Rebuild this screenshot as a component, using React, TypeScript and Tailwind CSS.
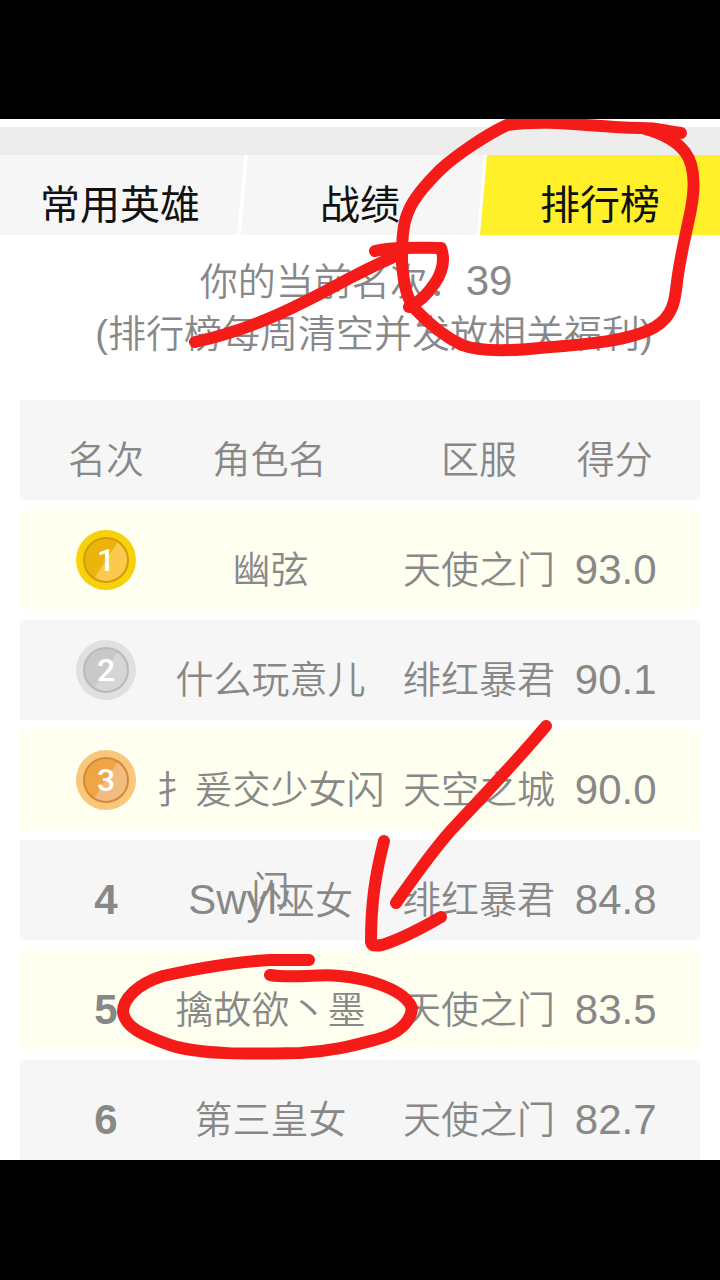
import React, { useState } from 'react';

interface Player {
  rank: number;
  name: React.ReactNode;
  server: string;
  score: string;
}

interface MedalProps {
  rank: number;
}

const TABS = ['常用英雄', '战绩', '排行榜'];

const TAB_SHAPES = [
  '-mr-1 pr-1 [clip-path:polygon(0_0,100%_0,calc(100%-7px)_100%,0_100%)]',
  '-mr-1 pr-1 [clip-path:polygon(8px_0,100%_0,calc(100%-7px)_100%,1px_100%)]',
  '[clip-path:polygon(7px_0,100%_0,100%_100%,0_100%)]',
];

const PLAYERS: Player[] = [
  { rank: 1, name: '幽弦', server: '天使之门', score: '93.0' },
  { rank: 2, name: '什么玩意儿', server: '绯红暴君', score: '90.1' },
  { rank: 3, name: '扌爰交少女闪闪', server: '天空之城', score: '90.0' },
  { rank: 4, name: <><span className="text-[42px]">Swyl</span>巫女</>, server: '绯红暴君', score: '84.8' },
  { rank: 5, name: '擒故欲丶墨', server: '天使之门', score: '83.5' },
  { rank: 6, name: '第三皇女', server: '天使之门', score: '82.7' },
];

const MEDAL_COLORS = [
  { rim: '#f7d20a', ring: '#d49a0c', dark: '#eab40c', light: '#fbc94b' },
  { rim: '#e0e0e0', ring: '#b9b9b9', dark: '#c9c9c9', light: '#d6d6d6' },
  { rim: '#f9c67a', ring: '#cf8a3c', dark: '#efa543', light: '#f3bb80' },
];

const Medal: React.FC<MedalProps> = ({ rank }) => {
  const color = MEDAL_COLORS[rank - 1];

  return (
    <span className="relative inline-flex w-15 h-15 items-center justify-center align-top">
      <svg viewBox="0 0 60 60" className="absolute inset-0 w-full h-full" aria-hidden="true">
        <circle cx="30" cy="30" r="30" fill={color.rim} />
        <circle cx="30" cy="30" r="22" fill={color.dark} />
        <path d="M42 11.500A22 22 0 0 1 18 48.500Z" fill={color.light} />
        <circle cx="30" cy="30" r="22" fill="none" stroke={color.ring} strokeWidth="2" />
      </svg>
      <span className="relative font-['Roboto'] font-medium text-[32px] leading-none text-white">{rank}</span>
    </span>
  );
};

// Hand-drawn marks over the page
const Marks: React.FC = () => (
  <svg
    viewBox="0 0 720 1042"
    className="absolute inset-x-0 top-0 w-full z-20 pointer-events-none"
    fill="none"
    stroke="#f51b18"
    strokeWidth="12"
    strokeLinecap="round"
    strokeLinejoin="round"
    aria-hidden="true"
  >
    <path d="M681 14C660 11 660 9 640 9C590 8 550 0 507 6C484 17 455 37 440 51C422 69 413 81 409 91C402 105 402 125 402 145C404 165 406 178 415 190C430 206 445 218 462 226C480 233 510 232 540 229C590 225 630 222 655 208C673 197 675 182 677 163C680 138 686 115 691 90C696 63 694 45 685 33C675 20 660 14 645 10" />
    <path d="M195 223C255 210 300 186 350 159Q375 146 400 135M375 132C395 127 425 129 441 129C446 143 441 155 435 164C427 176 418 184 409 188" />
    <path d="M546 607C520 638 490 670 455 707C435 728 415 757 396 784M384 722C375 757 371 785 371 823Q372 828 382 826C405 819 425 807 441 798" />
    <path d="M309 841H270C230 843 190 851 163 857C137 865 123 880 123 893C125 908 142 916 170 926C200 936 250 935 300 934C335 932 355 926 378 920C398 915 411 903 412 889C407 876 388 867 365 861C325 851 300 861 270 856" />
  </svg>
);

const App: React.FC = () => {
  const [activeTab, setActiveTab] = useState(2);

  return (
    <div className="min-h-screen bg-black py-[119px]">
      <main
        lang="zh-CN"
        className="relative overflow-hidden bg-white pt-2 text-[#888888] text-[38px] font-[350] font-['Liberation_Sans','Noto_Sans_CJK_SC',sans-serif]"
      >
        <div className="h-7 bg-[#ededed]" />
        <nav className="grid grid-cols-3 text-[40px]">
          {TABS.map((tab, index) => (
            <button
              key={tab}
              type="button"
              onClick={() => setActiveTab(index)}
              className={`h-20 pt-5 leading-[60px] font-normal text-[#111111] ${TAB_SHAPES[index]} ${index === activeTab ? 'bg-[#fff02a]' : 'bg-[#f6f6f6]'}`}
            >
              {tab}
            </button>
          ))}
        </nav>

        <div className="pt-5 text-center leading-[52px]">
          <p className="pr-2">你的当前名次：<span className="text-[42px]">39</span></p>
          <p className="pl-7 whitespace-nowrap">(排行榜每周清空并发放相关福利)</p>
        </div>

        <div className="px-5 pt-[30px]">
          <table className="w-full table-fixed border-separate border-spacing-x-0 border-spacing-y-[10px] -mb-[10px] leading-[100px]">
            <thead>
              <tr className="bg-[#f6f6f6]">
                <th scope="col" className="w-1/5 p-0 pl-9 font-[350]"><div className="h-[100px] pt-2.5">名次</div></th>
                <th scope="col" className="w-[34%] p-0 pr-1 font-[350]"><div className="h-[100px] pt-2.5">角色名</div></th>
                <th scope="col" className="w-[27%] p-0 font-[350]"><div className="h-[100px] pt-2.5">区服</div></th>
                <th scope="col" className="p-0 pl-1.5 text-left font-[350]"><div className="h-[100px] pt-2.5">得分</div></th>
              </tr>
            </thead>
            <tbody>
              {PLAYERS.map(player => (
                <tr key={player.rank} className={player.rank % 2 ? 'bg-[#fffff0]' : 'bg-[#f6f6f6]'}>
                  <td className="p-0 pl-9 text-center">
                    {player.rank <= 3
                      ? <div className="h-[100px] pt-5"><Medal rank={player.rank} /></div>
                      : <div className="h-[100px] pt-2.5 text-[42px] font-bold">{player.rank}</div>}
                  </td>
                  <td className="p-0 pr-0.5 text-center">
                    <div className="relative z-10 h-[100px] pt-2.5">{player.name}</div>
                  </td>
                  <td className="p-0 text-center"><div className="h-[100px] pt-2.5">{player.server}</div></td>
                  <td className="p-0 pl-1 text-[42px]"><div className="h-[100px] pt-2.5">{player.score}</div></td>
                </tr>
              ))}
            </tbody>
          </table>
        </div>
        <Marks />
      </main>
    </div>
  );
};

export default App;
